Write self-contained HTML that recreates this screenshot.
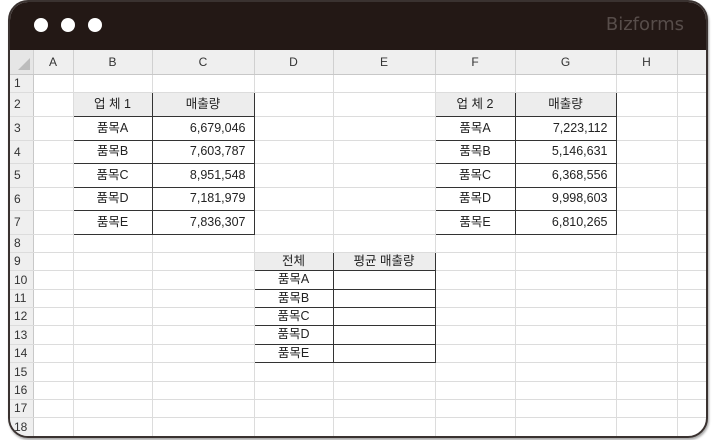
<!DOCTYPE html>
<html><head><meta charset="utf-8"><style>
*{margin:0;padding:0;box-sizing:border-box}
body{width:715px;height:440px;background:#fff;position:relative;overflow:hidden;font-family:"Liberation Sans","Noto Sans CJK KR",sans-serif}
#frame{position:absolute;left:8px;top:0;width:700px;height:438px;border:2px solid #3a3230;border-radius:20px;overflow:hidden;background:#fff;box-shadow:1px 2px 2px rgba(0,0,0,.35)}
#bar{position:absolute;left:0;top:0;width:100%;height:48px;background:#231815}
.dot{position:absolute;top:16px;width:14px;height:14px;border-radius:50%;background:#fff}
#logo{position:absolute;right:22px;top:12px;color:#574d4a;font-size:18px;font-family:"DejaVu Sans","Liberation Sans",sans-serif}
table{position:absolute;left:0;top:48px;width:727px;border-collapse:collapse;table-layout:fixed;font-size:12.5px;color:#222}
td{border-right:1px solid #dcdcdc;border-bottom:1px solid #dcdcdc;padding:0;white-space:nowrap;overflow:hidden;text-align:center;line-height:1}
tr.h td{background:#efefef;border-right:1px solid #d0d0d0;border-bottom:1px solid #c8c8c8;color:#333;font-size:12px}
td.r{background:#efefef;text-align:left;padding-left:4px;border-right:1px solid #c8c8c8;color:#333;font-size:12px}
td.k{border:1.5px solid #333}
td.kh{border:1.5px solid #333;background:#ededed}
td.n{border:1.5px solid #333;text-align:right;padding-right:8px}
</style></head><body>
<div id="frame">
<div id="bar"><div class="dot" style="left:24px"></div><div class="dot" style="left:51px"></div><div class="dot" style="left:78px"></div><div id="logo">Bizforms</div></div>
<table>
<colgroup><col style="width:23px"><col style="width:40px"><col style="width:79px"><col style="width:102px"><col style="width:79px"><col style="width:102px"><col style="width:80px"><col style="width:101px"><col style="width:61px"><col style="width:60px"></colgroup>
<tr class="h" style="height:24px"><td style="background:#e6e6e6"><svg width="12" height="12" style="margin-left:6px;margin-top:6px"><polygon points="12,0 12,12 0,12" fill="#bcbcbc"/></svg></td><td>A</td><td>B</td><td>C</td><td>D</td><td>E</td><td>F</td><td>G</td><td>H</td><td>I</td></tr>
<tr style="height:18px"><td class="r">1</td><td></td><td></td><td></td><td></td><td></td><td></td><td></td><td></td><td></td></tr>
<tr style="height:24px"><td class="r">2</td><td></td><td class="kh">업 체 1</td><td class="kh">매출량</td><td></td><td></td><td class="kh">업 체 2</td><td class="kh">매출량</td><td></td><td></td></tr>
<tr style="height:24px"><td class="r">3</td><td></td><td class="k">품목A</td><td class="n">6,679,046</td><td></td><td></td><td class="k">품목A</td><td class="n">7,223,112</td><td></td><td></td></tr>
<tr style="height:23px"><td class="r">4</td><td></td><td class="k">품목B</td><td class="n">7,603,787</td><td></td><td></td><td class="k">품목B</td><td class="n">5,146,631</td><td></td><td></td></tr>
<tr style="height:24px"><td class="r">5</td><td></td><td class="k">품목C</td><td class="n">8,951,548</td><td></td><td></td><td class="k">품목C</td><td class="n">6,368,556</td><td></td><td></td></tr>
<tr style="height:23px"><td class="r">6</td><td></td><td class="k">품목D</td><td class="n">7,181,979</td><td></td><td></td><td class="k">품목D</td><td class="n">9,998,603</td><td></td><td></td></tr>
<tr style="height:24px"><td class="r">7</td><td></td><td class="k">품목E</td><td class="n">7,836,307</td><td></td><td></td><td class="k">품목E</td><td class="n">6,810,265</td><td></td><td></td></tr>
<tr style="height:18px"><td class="r">8</td><td></td><td></td><td></td><td></td><td></td><td></td><td></td><td></td><td></td></tr>
<tr style="height:18px"><td class="r">9</td><td></td><td></td><td></td><td class="kh">전체</td><td class="kh">평균 매출량</td><td></td><td></td><td></td><td></td></tr>
<tr style="height:19px"><td class="r">10</td><td></td><td></td><td></td><td class="k">품목A</td><td class="k"></td><td></td><td></td><td></td><td></td></tr>
<tr style="height:18px"><td class="r">11</td><td></td><td></td><td></td><td class="k">품목B</td><td class="k"></td><td></td><td></td><td></td><td></td></tr>
<tr style="height:18px"><td class="r">12</td><td></td><td></td><td></td><td class="k">품목C</td><td class="k"></td><td></td><td></td><td></td><td></td></tr>
<tr style="height:19px"><td class="r">13</td><td></td><td></td><td></td><td class="k">품목D</td><td class="k"></td><td></td><td></td><td></td><td></td></tr>
<tr style="height:18px"><td class="r">14</td><td></td><td></td><td></td><td class="k">품목E</td><td class="k"></td><td></td><td></td><td></td><td></td></tr>
<tr style="height:19px"><td class="r">15</td><td></td><td></td><td></td><td></td><td></td><td></td><td></td><td></td><td></td></tr>
<tr style="height:18px"><td class="r">16</td><td></td><td></td><td></td><td></td><td></td><td></td><td></td><td></td><td></td></tr>
<tr style="height:18px"><td class="r">17</td><td></td><td></td><td></td><td></td><td></td><td></td><td></td><td></td><td></td></tr>
<tr style="height:19px"><td class="r">18</td><td></td><td></td><td></td><td></td><td></td><td></td><td></td><td></td><td></td></tr>
</table>
</div>
</body></html>
